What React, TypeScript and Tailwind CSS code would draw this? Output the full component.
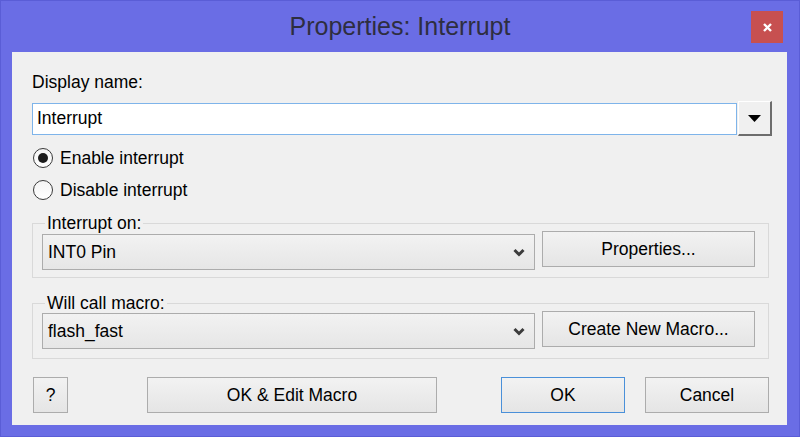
import type { ReactNode } from "react";

function Chevron() {
  return (
    <svg width="12" height="9" viewBox="0 0 12 9" className="shrink-0">
      <polyline points="1.5,2 6,6.5 10.5,2" fill="none" stroke="#3c3c3c" strokeWidth="3" />
    </svg>
  );
}

function Select({ value }: { value: string }) {
  return (
    <div className="w-[493px] h-[36px] flex items-center justify-between pl-[5px] pr-[9px] border border-[#acacac] bg-linear-to-b from-[#f2f2f2] to-[#e6e6e6] text-[17.5px] text-black">
      <span>{value}</span>
      <Chevron />
    </div>
  );
}

function Button({
  children,
  className = "",
  primary = false,
}: {
  children: ReactNode;
  className?: string;
  primary?: boolean;
}) {
  return (
    <button
      className={
        "flex items-center justify-center text-[17.5px] text-black bg-linear-to-b from-[#f2f2f2] to-[#e5e5e5] border " +
        (primary ? "border-[#4a90d9]" : "border-[#acacac]") +
        " " +
        className
      }
    >
      {children}
    </button>
  );
}

function Radio({ label, checked }: { label: string; checked?: boolean }) {
  return (
    <div className="flex items-center h-[20px] ml-[1px] gap-[7px]">
      <div className="w-[20px] h-[20px] rounded-full border border-[#3a3a3a] bg-linear-to-b from-[#f4f4f4] to-white flex items-center justify-center">
        {checked && <div className="w-[10px] h-[10px] rounded-full bg-[#1c1c1c]" />}
      </div>
      <span className="text-[17.5px] leading-[20px] text-black">{label}</span>
    </div>
  );
}

function Group({ label, children, className = "" }: { label: string; children: ReactNode; className?: string }) {
  return (
    <div className={"relative border border-[#d9d9d9] mr-[3px] pl-[9px] pr-[13px] flex items-start gap-[7px] " + className}>
      <span className="absolute left-[12px] top-[-10px] px-[2px] bg-[#f0f0f0] text-[17.5px] leading-[18px] text-black">
        {label}
      </span>
      {children}
    </div>
  );
}

export default function App() {
  return (
    <div className="w-[800px] h-[437px] bg-[#6a6de5] border border-[#5a5dd6] flex flex-col font-['Liberation_Sans',Arial,sans-serif]">
      <div className="h-[51px] grid grid-cols-[1fr_auto_1fr] items-start">
        <div />
        <div className="pt-[10px] text-[25px] leading-[30px] text-[#2e2e40]">Properties: Interrupt</div>
        <div className="flex justify-end pt-[10px] pr-[16px]">
          <button className="w-[32px] h-[32px] bg-[#c75050] flex items-center justify-center">
            <svg width="9" height="9" viewBox="0 0 9 9">
              <path d="M1 1L8 8M8 1L1 8" stroke="white" strokeWidth="2.4" />
            </svg>
          </button>
        </div>
      </div>

      <div className="ml-[11px] mr-[12px] h-[373px] bg-[#f0f0f0] pl-[20px] pr-[15px] pt-[20px] flex flex-col">
        <div className="text-[17.5px] leading-[20px] text-black">Display name:</div>

        <div className="mt-[9px] h-[35px] flex items-center">
          <div className="flex-1 h-[32px] bg-white border border-[#7eb4ea] flex items-center pl-[4px] text-[17.5px] text-black">
            Interrupt
          </div>
          <button className="w-[34px] h-[35px] ml-[1px] bg-[#f0f0f0] border-t border-l border-t-white border-l-white border-r-2 border-b-2 border-r-[#6d6d6d] border-b-[#6d6d6d] flex items-center justify-center">
            <svg width="13" height="7" viewBox="0 0 13 7">
              <polygon points="0,0 13,0 6.5,7" fill="black" />
            </svg>
          </button>
        </div>

        <div className="mt-[12px]">
          <Radio label="Enable interrupt" checked />
        </div>
        <div className="mt-[12px]">
          <Radio label="Disable interrupt" />
        </div>

        <Group label="Interrupt on:" className="mt-[23px] h-[55px]">
          <div className="mt-[10px]">
            <Select value="INT0 Pin" />
          </div>
          <Button className="mt-[7px] w-[214px] h-[36px]">Properties...</Button>
        </Group>

        <Group label="Will call macro:" className="mt-[25px] h-[56px]">
          <div className="mt-[9px]">
            <Select value="flash_fast" />
          </div>
          <Button className="mt-[7px] w-[214px] h-[36px]">Create New Macro...</Button>
        </Group>

        <div className="mt-[18px] flex items-center">
          <Button className="ml-[1px] w-[35px] h-[36px]">?</Button>
          <Button className="ml-[79px] w-[290px] h-[36px]">OK &amp; Edit Macro</Button>
          <Button primary className="ml-[64px] w-[124px] h-[36px]">OK</Button>
          <Button className="ml-[20px] w-[124px] h-[36px]">Cancel</Button>
        </div>
      </div>
    </div>
  );
}
